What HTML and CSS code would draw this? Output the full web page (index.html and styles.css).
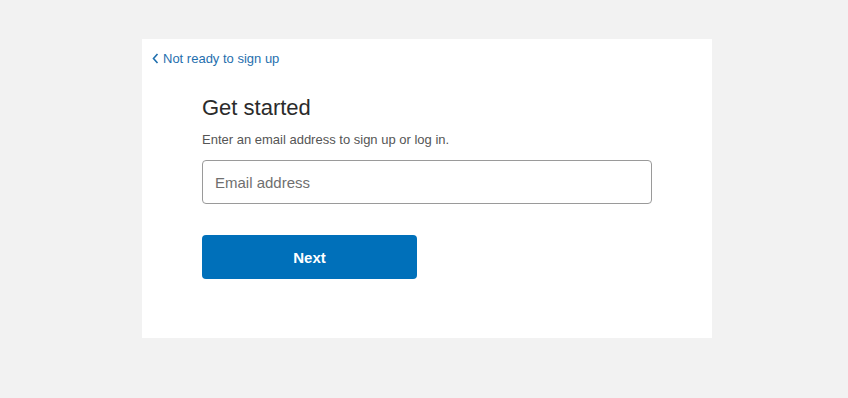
FILE: index.html
```html
<!DOCTYPE html>
<html>
<head>
<meta charset="utf-8">
<link rel="stylesheet" href="styles.css">
</head>
<body>
<div class="page">
  <div class="card">
    <a class="back" href="#"><svg class="chev" width="7" height="11" viewBox="0 0 7 11"><path d="M5.5 1 L1.5 5.5 L5.5 10" fill="none" stroke="#1f6fae" stroke-width="1.6"/></svg>Not ready to sign up</a>
    <div class="form">
      <h1 class="title">Get started</h1>
      <p class="sub">Enter an email address to sign up or log in.</p>
      <input class="email" type="text" placeholder="Email address">
      <button class="next">Next</button>
    </div>
  </div>
</div>
</body>
</html>
```
FILE: styles.css
```css
html, body { margin: 0; padding: 0; }
body {
  background: #f2f2f2;
  font-family: "Liberation Sans", Arial, sans-serif;
  width: 848px;
  height: 398px;
}
.page {
  padding-top: 39px;
  padding-left: 142px;
}
.card {
  width: 570px;
  height: 299px;
  background: #fff;
  box-sizing: border-box;
  padding: 11px 0 0 10px;
}
.back {
  display: inline-flex;
  align-items: center;
  gap: 4px;
  color: #1f6fae;
  text-decoration: none;
  font-size: 13px;
  line-height: 15px;
}
.chev { margin-top: 1px; }
.form {
  padding-left: 50px;
  padding-top: 27px;
  display: flex;
  flex-direction: column;
  align-items: flex-start;
}
.title {
  margin: 0;
  font-weight: normal;
  font-size: 22px;
  line-height: 25px;
  color: #2b2b2b;
}
.sub {
  margin: 12px 0 0 0;
  font-size: 13px;
  line-height: 15px;
  color: #555;
}
.email {
  margin-top: 13px;
  width: 450px;
  height: 44px;
  box-sizing: border-box;
  border: 1px solid #9a9a9a;
  border-radius: 4px;
  padding: 0 12px;
  font-family: "Liberation Sans", Arial, sans-serif;
  font-size: 15px;
  outline: none;
}
.email::placeholder { color: #6f6f6f; }
.next {
  margin-top: 31px;
  width: 215px;
  height: 44px;
  border: none;
  border-radius: 4px;
  background: #0070ba;
  color: #fff;
  font-family: "Liberation Sans", Arial, sans-serif;
  font-weight: bold;
  font-size: 15px;
}
```
